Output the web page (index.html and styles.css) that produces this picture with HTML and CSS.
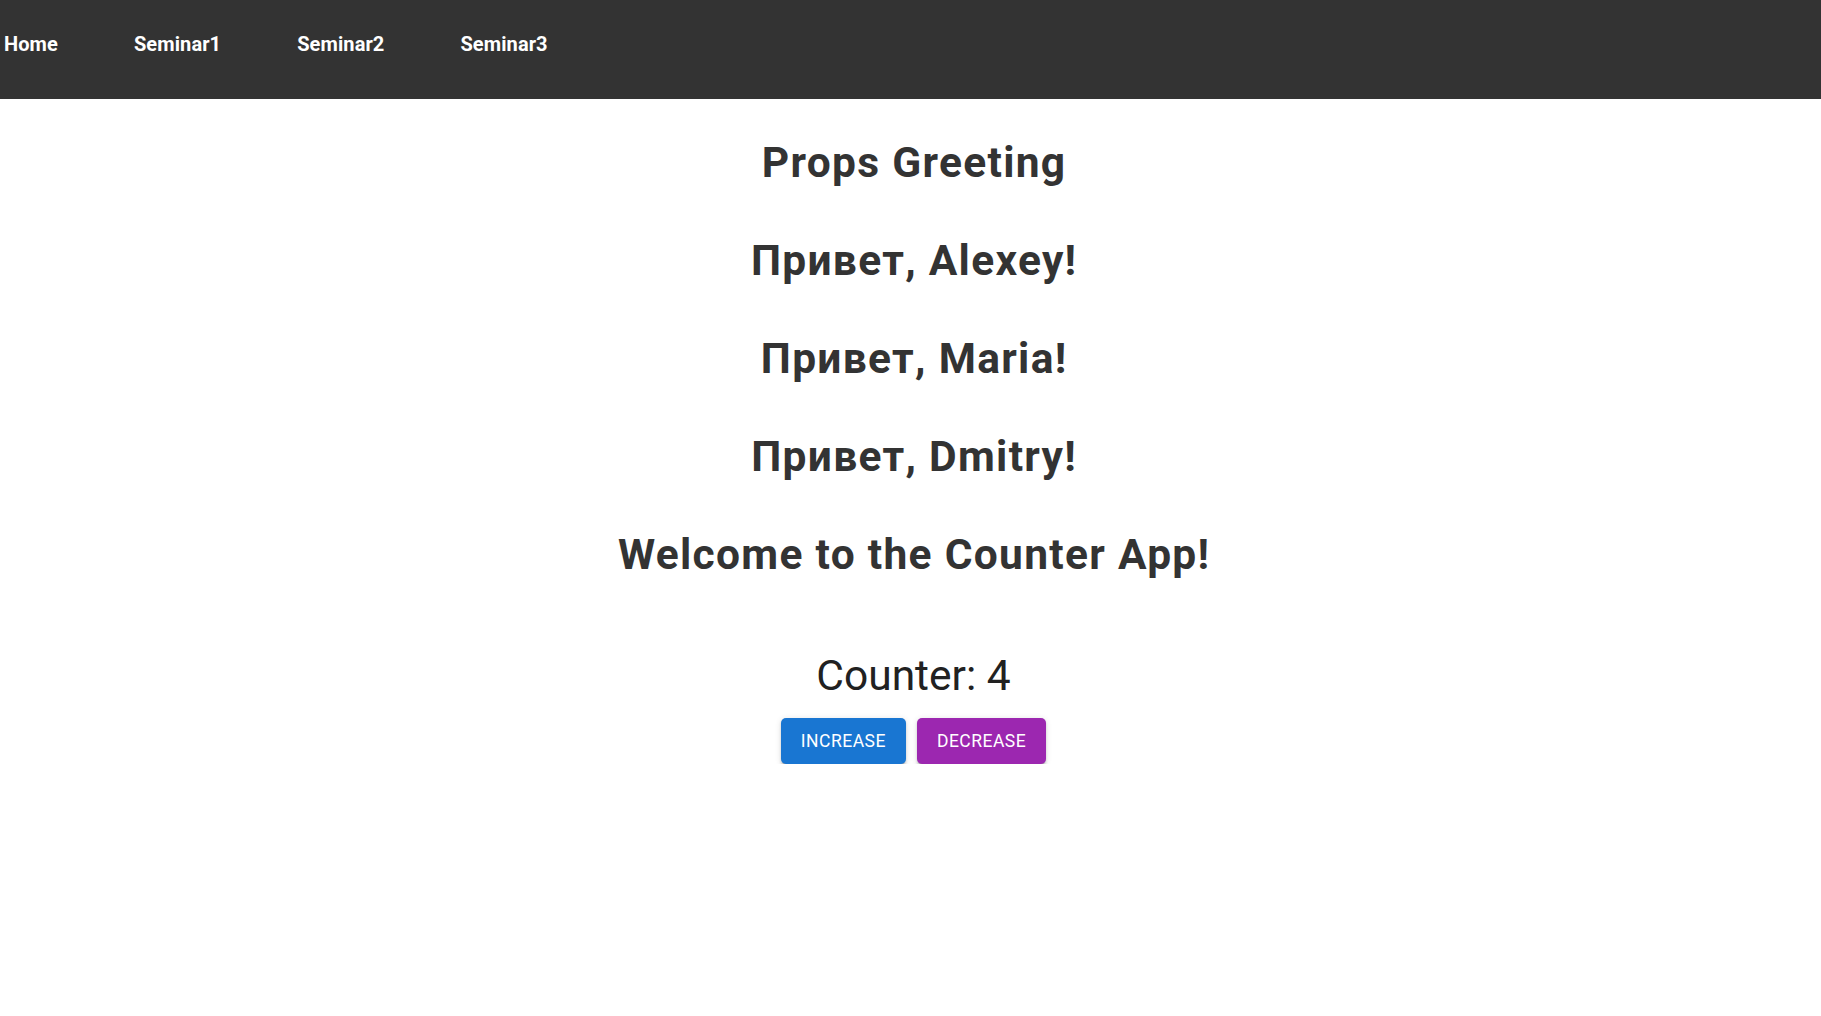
FILE: index.html
```html
<!DOCTYPE html>
<html lang="ru">
<head>
<meta charset="utf-8">
<title>Counter App</title>
<link rel="stylesheet" href="styles.css">
</head>
<body>
<nav class="navbar">
  <ul class="nav-list">
    <li><a class="nav-link" href="#">Home</a></li>
    <li><a class="nav-link" href="#">Seminar1</a></li>
    <li><a class="nav-link" href="#">Seminar2</a></li>
    <li><a class="nav-link" href="#">Seminar3</a></li>
  </ul>
</nav>
<main class="content">
  <h1 class="heading">Props Greeting</h1>
  <h1 class="heading">Привет, Alexey!</h1>
  <h1 class="heading">Привет, Maria!</h1>
  <h1 class="heading">Привет, Dmitry!</h1>
  <h1 class="heading">Welcome to the Counter App!</h1>
  <section class="counter">
    <div class="counter-value">Counter: 4</div>
    <div class="buttons">
      <button class="btn btn-blue" type="button">Increase</button>
      <button class="btn btn-purple" type="button">Decrease</button>
    </div>
  </section>
</main>
</body>
</html>
```

FILE: styles.css
```css
html, body {
  margin: 0;
  padding: 0;
  background: #ffffff;
  font-family: Roboto, "Noto Sans", Arial, sans-serif;
}

.navbar {
  background: #333333;
  height: 99px;
  box-sizing: border-box;
  padding-top: 33px;
}

.nav-list {
  list-style: none;
  margin: 0;
  padding: 0 0 0 4px;
  display: flex;
  gap: 76px;
}

.nav-link {
  color: #ffffff;
  text-decoration: none;
  font-weight: 700;
  font-size: 20px;
  line-height: 23.4px;
  display: block;
  letter-spacing: 0.1px;
}

.content {
  display: flex;
  flex-direction: column;
  align-items: center;
  padding-top: 39px;
  padding-left: 6px;
}

.heading {
  margin: 0 0 48px 0;
  padding-left: 1.3px;
  font-size: 42.5px;
  line-height: 50px;
  font-weight: 700;
  letter-spacing: 1.3px;
  color: #333333;
  text-align: center;
}

.heading:last-of-type {
  margin-bottom: 71px;
}

.counter {
  display: flex;
  flex-direction: column;
  align-items: center;
}

.counter-value {
  font-size: 42.5px;
  line-height: 50px;
  font-weight: 400;
  color: #212121;
  margin-bottom: 17px;
}

.buttons {
  display: flex;
  gap: 11px;
}

.btn {
  border: 0;
  border-radius: 5px;
  padding: 7.5px 20px;
  font-family: Roboto, "Noto Sans", Arial, sans-serif;
  font-size: 17.5px;
  font-weight: 400;
  line-height: 30.6px;
  letter-spacing: 0.5px;
  text-transform: uppercase;
  color: #ffffff;
  cursor: pointer;
  box-shadow: 0 3.75px 1.25px -2.5px rgba(0,0,0,0.2), 0 2.5px 2.5px 0 rgba(0,0,0,0.14), 0 1.25px 6.25px 0 rgba(0,0,0,0.12);
}

.btn-blue {
  background: #1976d2;
}

.btn-purple {
  background: #9c27b0;
}
```
